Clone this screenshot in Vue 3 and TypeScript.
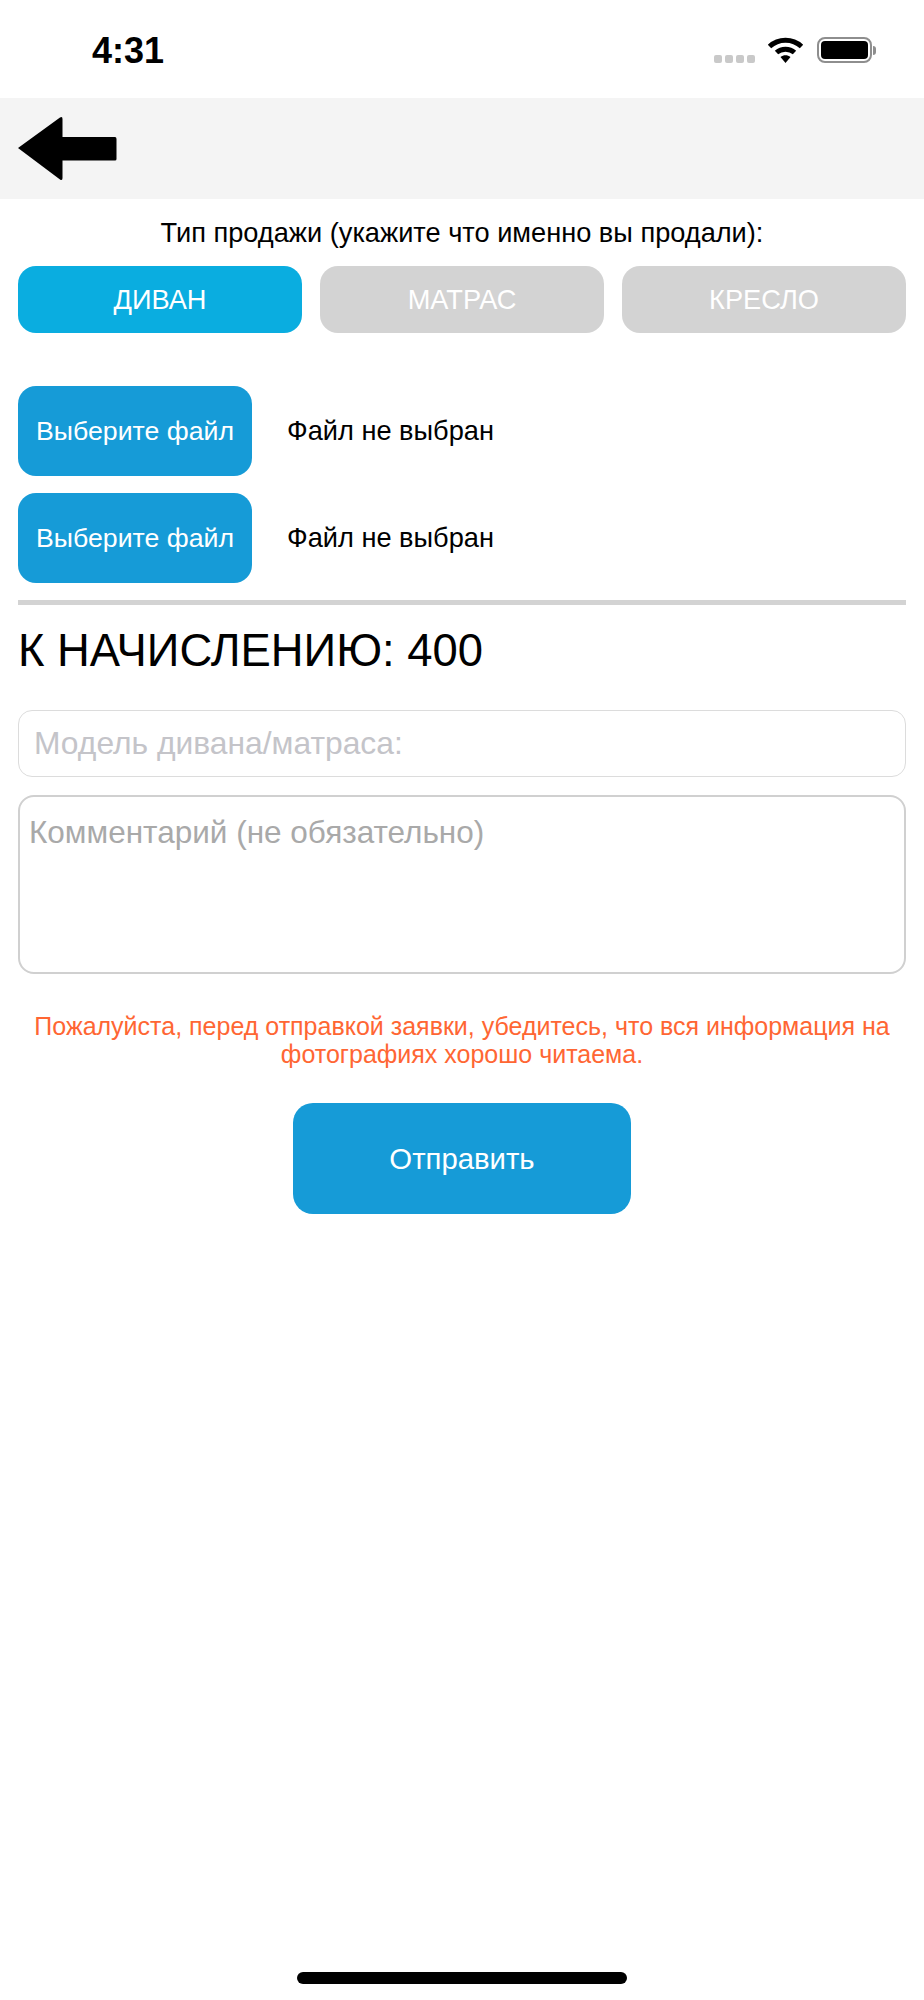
<template>
  <div class="screen">
    <div class="status-bar">
      <span class="time">4:31</span>
      <div class="status-icons">
        <div class="signal">
          <i v-for="n in 4" :key="n"></i>
        </div>
        <svg class="wifi" width="37" height="26" viewBox="0 0 37 26">
          <path d="M2.5 9.5C11.5 1.2 25.5 1.2 34.5 9.5" fill="none" stroke="#000" stroke-width="5" />
          <path d="M9.5 15.5C14.5 11 22.5 11 27.5 15.5" fill="none" stroke="#000" stroke-width="5" />
          <path d="M13.5 20C16.5 17.6 20.5 17.6 23.5 20L18.5 26Z" fill="#000" />
        </svg>
        <div class="battery">
          <div class="battery-fill"></div>
        </div>
        <div class="battery-nub"></div>
      </div>
    </div>

    <div class="nav">
      <svg class="back" width="100" height="67" viewBox="0 0 100 67" @click="goBack">
        <path
          d="M0 33L42 2.5Q44.5 1 44.5 4V22H97Q98.5 22 98.5 24V44Q98.5 45.5 97 45.5H44.5V63Q44.5 66 42 64.5L0 33Z"
          fill="#000"
        />
      </svg>
    </div>

    <div class="content">
      <p class="type-label">Тип продажи (укажите что именно вы продали):</p>
      <div class="type-row">
        <button
          v-for="t in saleTypes"
          :key="t"
          class="type-btn"
          :class="{ active: t === saleType }"
          @click="saleType = t"
        >
          {{ t }}
        </button>
      </div>

      <div class="files">
        <div v-for="n in 2" :key="n" class="file-row">
          <button class="file-btn">Выберите файл</button>
          <span class="file-name">Файл не выбран</span>
        </div>
      </div>

      <div class="divider"></div>

      <h2 class="total">К НАЧИСЛЕНИЮ: {{ bonus }}</h2>

      <input v-model="model" class="model-input" type="text" placeholder="Модель дивана/матраса:" />
      <textarea v-model="comment" class="comment" placeholder="Комментарий (не обязательно)"></textarea>

      <p class="warning">
        Пожалуйста, перед отправкой заявки, убедитесь, что вся информация на фотографиях хорошо читаема.
      </p>

      <button class="submit">Отправить</button>
    </div>

    <div class="home-indicator"></div>
  </div>
</template>

<script setup lang="ts">
import { ref } from 'vue'

const saleTypes = ['ДИВАН', 'МАТРАС', 'КРЕСЛО']
const saleType = ref('ДИВАН')
const bonus = ref(400)
const model = ref('')
const comment = ref('')

const goBack = () => {
  window.history.back()
}
</script>

<style>
body {
  background: #fff;
}
</style>

<style scoped>
.screen {
  position: relative;
  height: 2000px;
  background: #fff;
  font-family: "Liberation Sans", Arial, sans-serif;
  color: #000;
  overflow: hidden;
}

.status-bar {
  height: 98px;
  box-sizing: border-box;
  padding: 31px 48px 0 92px;
  display: flex;
  justify-content: space-between;
  align-items: flex-start;
}

.time {
  font-size: 36px;
  line-height: 40px;
  font-weight: 700;
}

.status-icons {
  display: flex;
  align-items: flex-start;
  padding-top: 6px;
}

.signal {
  display: flex;
  gap: 3px;
  margin-top: 18px;
  margin-right: 12px;
}

.signal i {
  display: block;
  width: 8px;
  height: 8px;
  border-radius: 2px;
  background: #c9c9c9;
}

.wifi {
  margin-right: 13px;
}

.battery {
  width: 55px;
  height: 26px;
  box-sizing: border-box;
  border: 2px solid #8e8e8e;
  border-radius: 8px;
  padding: 2px;
}

.battery-fill {
  height: 100%;
  background: #000;
  border-radius: 4px;
}

.battery-nub {
  width: 3px;
  height: 9px;
  margin: 9px 0 0 1px;
  background: #8e8e8e;
  border-radius: 0 3px 3px 0;
}

.nav {
  height: 101px;
  background: #f4f4f4;
  padding-left: 18px;
  display: flex;
  align-items: center;
}

.back {
  display: block;
}

.content {
  padding: 0 18px;
  display: flex;
  flex-direction: column;
}

.type-label {
  margin: 19px 0 0;
  font-size: 27.2px;
  line-height: 30px;
  text-align: center;
}

.type-row {
  display: flex;
  gap: 18px;
  margin-top: 18px;
}

.type-btn {
  flex: 1;
  height: 67px;
  border: none;
  border-radius: 18px;
  background: #d3d3d3;
  color: #fff;
  font-family: inherit;
  font-size: 27.2px;
  padding: 0;
}

.type-btn.active {
  background: #0aade0;
}

.files {
  margin-top: 53px;
  display: flex;
  flex-direction: column;
  gap: 17px;
}

.file-row {
  display: flex;
  align-items: center;
  gap: 35px;
}

.file-btn {
  width: 234px;
  height: 90px;
  border: none;
  border-radius: 18px;
  background: #169bd7;
  color: #fff;
  font-family: inherit;
  font-size: 26.7px;
  padding: 0;
}

.file-name {
  font-size: 27.2px;
}

.divider {
  height: 5px;
  margin-top: 17px;
  background: #d3d3d3;
}

.total {
  margin: 21px 0 0;
  font-size: 45.4px;
  line-height: 50px;
  font-weight: 400;
}

.model-input {
  margin-top: 34px;
  height: 67px;
  box-sizing: border-box;
  border: 1px solid #dcdcdc;
  border-radius: 14px;
  padding: 0 15px;
  font-family: inherit;
  font-size: 31.8px;
  outline: none;
}

.model-input::placeholder {
  color: #c4c4c9;
}

.comment {
  display: block;
  margin-top: 18px;
  height: 179px;
  box-sizing: border-box;
  border: 2px solid #d0d0d0;
  border-radius: 16px;
  padding: 17px 9px;
  font-family: inherit;
  font-size: 31.5px;
  line-height: 36px;
  resize: none;
  outline: none;
}

.comment::placeholder {
  color: #a9a9a9;
}

.warning {
  margin: 39px 0 0;
  font-size: 25px;
  line-height: 27.5px;
  text-align: center;
  color: #ff6633;
}

.submit {
  align-self: center;
  margin-top: 35px;
  width: 338px;
  height: 111px;
  border: none;
  border-radius: 20px;
  background: #169bd7;
  color: #fff;
  font-family: inherit;
  font-size: 29.3px;
  padding: 0;
}

.home-indicator {
  position: absolute;
  left: 297px;
  bottom: 16px;
  width: 330px;
  height: 12px;
  border-radius: 6px;
  background: #000;
}
</style>
